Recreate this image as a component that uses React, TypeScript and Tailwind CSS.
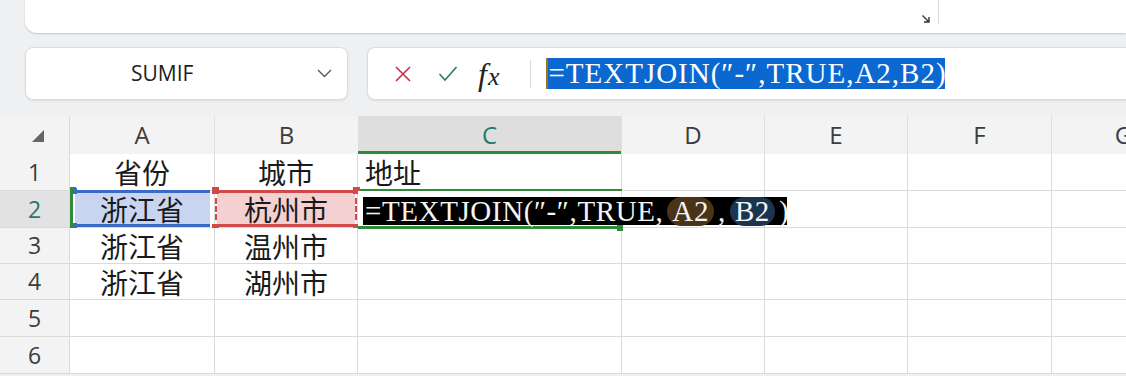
import React from "react";

const cols = ["A", "B", "C", "D", "E", "F", "G"];
const rowHeights = ["h-[37px]", "h-[37px]", "h-[36px]", "h-[36px]", "h-[37px]", "h-[37px]"];

const data: Record<string, string> = {
  A1: "省份",
  B1: "城市",
  A3: "浙江省",
  B3: "温州市",
  A4: "浙江省",
  B4: "湖州市",
};

const cjk = { fontFamily: '"Noto Sans CJK SC", "Noto Sans", sans-serif' };
const ui = { fontFamily: '"Open Sans", "Noto Sans", sans-serif' };
const serif = { fontFamily: '"Liberation Serif", "DejaVu Serif", serif' };

function RedSquare({ className }: { className: string }) {
  return <div className={`absolute h-[7px] w-[7px] bg-[#d04a4a] ${className}`} />;
}

function Cell({ col, row }: { col: string; row: number }) {
  const key = `${col}${row}`;
  const base = "relative border-r border-b border-[#dadada] bg-white";

  if (key === "A2") {
    return (
      <div className={base}>
        <div className="absolute left-0 top-[-4px] bottom-[-4px] w-[3px] bg-[#2f8a3a]" />
        <div className="absolute left-0 top-[-4px] h-[2px] w-[6px] bg-[#2f8a3a]" />
        <div className="absolute left-0 bottom-[-4px] h-[2px] w-[6px] bg-[#2f8a3a]" />
        <div className="absolute left-[5px] right-[4px] top-[-1px] bottom-0 border-y-[3px] border-[#3a6bc4] bg-[#c9d5f0]" />
        <div className="absolute left-[3px] top-[-3px] h-[6px] w-[4px] bg-[#3a6bc4]" />
        <div className="absolute left-[3px] bottom-[-2px] h-[6px] w-[4px] bg-[#3a6bc4]" />
        <div className="relative flex h-full items-center justify-center text-[28px] leading-none text-[#1a1a1a]" style={cjk}>
          浙江省
        </div>
      </div>
    );
  }

  if (key === "B2") {
    return (
      <div className={base}>
        <div className="absolute left-[2px] right-[2px] top-[-1px] bottom-0 border-y-[3px] border-[#d04a4a] bg-[#f4d0d0]" />
        <div className="absolute left-0 top-[7px] bottom-[7px] border-l-2 border-dashed border-[#d04a4a]" />
        <div className="absolute right-0 top-[7px] bottom-[7px] border-r-2 border-dashed border-[#d04a4a]" />
        <RedSquare className="left-[-3px] top-[-4px]" />
        <RedSquare className="right-[-3px] top-[-4px]" />
        <RedSquare className="left-[-3px] bottom-[-4px]" />
        <RedSquare className="right-[-3px] bottom-[-4px]" />
        <div className="relative flex h-full items-center justify-center text-[28px] leading-none text-[#1a1a1a]" style={cjk}>
          杭州市
        </div>
      </div>
    );
  }

  if (key === "C1") {
    return (
      <div className={base}>
        <div className="absolute left-0 right-[-3px] bottom-[-2px] h-[3px] bg-[#2f8a3a]" />
        <div className="flex h-full items-center pl-[7px] text-[28px] leading-none text-[#1a1a1a]" style={cjk}>
          地址
        </div>
      </div>
    );
  }

  if (key === "C2") {
    return (
      <div className={`${base} z-10`}>
        <div className="absolute left-0 right-0 bottom-[-2px] h-[3px] bg-[#2f8a3a]" />
        <div className="absolute right-[-2px] bottom-[-4px] h-[6px] w-[6px] bg-[#2f8a3a]" />
        <div
          className="absolute left-[5px] top-[6px] flex h-[28px] w-[424px] items-center whitespace-nowrap bg-black pl-[2px] text-[29px] leading-none tracking-[0.6px] text-[#f4f4f4]"
          style={serif}
        >
          =TEXTJOIN(″-″,TRUE,
          <span className="mx-[4px] rounded-full bg-[#4a3418] px-[5px]">A2</span>,
          <span className="mx-[4px] rounded-full bg-[#1b3550] px-[5px]">B2</span>)
        </div>
      </div>
    );
  }

  return (
    <div className={base}>
      {data[key] && (
        <div className="flex h-full items-center justify-center text-[28px] leading-none text-[#1a1a1a]" style={cjk}>
          {data[key]}
        </div>
      )}
    </div>
  );
}

export default function App() {
  return (
    <div className="h-[376px] w-[1126px] overflow-hidden bg-[#eef0f2]">
      {/* ribbon bottom */}
      <div className="ml-[25px] flex h-[33px] rounded-bl-xl bg-white shadow-[0_1px_2px_rgba(0,0,0,0.18)]">
        <div className="flex w-[913px] items-end justify-end pb-[9px] pr-[7px]">
          <svg width="10" height="10" viewBox="0 0 10 10">
            <path d="M1.5 1.5 L8 8 M8 3 V8 H3" fill="none" stroke="#333" strokeWidth="1.4" />
          </svg>
        </div>
        <div className="h-[24px] w-px bg-[#d8d8d8]" />
      </div>

      {/* name box + formula bar */}
      <div className="mt-[14px] flex gap-[19px] pl-[25px]">
        <div className="flex h-[53px] w-[323px] shrink-0 items-center justify-between rounded-lg border border-[#dcdcdc] bg-white pl-[105px] pr-[15px] shadow-[0_1px_2px_rgba(0,0,0,0.08)]">
          <span className="text-[21px] text-[#222]" style={ui}>
            SUMIF
          </span>
          <svg width="15" height="9" viewBox="0 0 15 9">
            <path d="M1 1 L7.5 7.5 L14 1" fill="none" stroke="#555" strokeWidth="1.3" />
          </svg>
        </div>
        <div className="flex h-[53px] w-[800px] shrink-0 items-center rounded-lg border border-[#dcdcdc] bg-white pl-[26px] shadow-[0_1px_2px_rgba(0,0,0,0.08)]">
          <svg width="18" height="18" viewBox="0 0 18 18">
            <path d="M2 2 L16 16 M16 2 L2 16" fill="none" stroke="#c4314b" strokeWidth="1.6" />
          </svg>
          <svg className="ml-[26px]" width="20" height="18" viewBox="0 0 20 18">
            <path d="M1.5 9 L7 15 L18.5 2" fill="none" stroke="#2e7d5b" strokeWidth="1.6" />
          </svg>
          <span className="ml-[20px] flex items-baseline italic leading-none text-[#222]" style={serif}>
            <span className="text-[32px]">f</span>
            <span className="ml-[1px] text-[26px]">x</span>
          </span>
          <div className="ml-[31px] h-[28px] w-px bg-[#d8d8d8]" />
          <div
            className="ml-[15px] flex h-[31px] w-[399px] items-center whitespace-nowrap border-l-2 border-[#a07020] bg-[#0b68d1] text-[29px] leading-none tracking-[1px] text-white"
            style={serif}
          >
            =TEXTJOIN(″-″,TRUE,A2,B2)
          </div>
        </div>
      </div>

      {/* grid */}
      <div className="mt-[16px] grid grid-cols-[70px_145px_143px_264px_143px_143px_144px_144px] bg-[#f3f3f3]">
        <div className="flex h-[38px] items-center justify-center border-r border-[#dadada]">
          <svg className="ml-[6px] mt-[2px]" width="12" height="12" viewBox="0 0 12 12">
            <path d="M12 0 V12 H0 Z" fill="#666" />
          </svg>
        </div>
        {cols.map((c) => (
          <div
            key={c}
            className={`relative flex h-[38px] items-center justify-center text-[24px] ${
              c === "C" ? "bg-[#dedede] text-[#1e7a6e]" : "text-[#3c3c3c]"
            } ${c === "B" ? "" : "border-r border-[#e0e0e0]"}`}
            style={ui}
          >
            {c}
            {c === "C" && <div className="absolute left-0 right-0 bottom-0 h-[3px] bg-[#2f8a3a]" />}
          </div>
        ))}

        {rowHeights.map((h, i) => {
          const r = i + 1;
          return (
            <React.Fragment key={r}>
              <div
                className={`${h} flex items-center justify-center border-r border-b border-[#dadada] text-[23px] ${
                  r === 2 ? "bg-[#e2e2e2] text-[#1e7a6e]" : "text-[#3c3c3c]"
                }`}
                style={ui}
              >
                {r}
              </div>
              {cols.map((c) => (
                <Cell key={c} col={c} row={r} />
              ))}
            </React.Fragment>
          );
        })}
      </div>
    </div>
  );
}
